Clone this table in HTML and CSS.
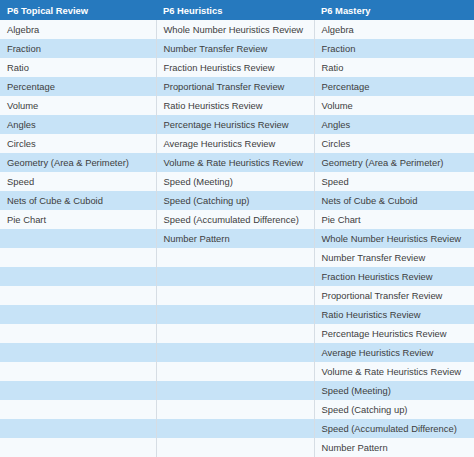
FILE: index.html
```html
<!DOCTYPE html>
<html>
<head>
<meta charset="utf-8">
<link rel="stylesheet" href="styles.css">
</head>
<body>
<table class="grid">
<colgroup><col class="c1"><col class="c2"><col class="c3"></colgroup>
<thead>
<tr><th>P6 Topical Review</th><th>P6 Heuristics</th><th>P6 Mastery</th></tr>
</thead>
<tbody>
<tr><td>Algebra</td><td>Whole Number Heuristics Review</td><td>Algebra</td></tr>
<tr><td>Fraction</td><td>Number Transfer Review</td><td>Fraction</td></tr>
<tr><td>Ratio</td><td>Fraction Heuristics Review</td><td>Ratio</td></tr>
<tr><td>Percentage</td><td>Proportional Transfer Review</td><td>Percentage</td></tr>
<tr><td>Volume</td><td>Ratio Heuristics Review</td><td>Volume</td></tr>
<tr><td>Angles</td><td>Percentage Heuristics Review</td><td>Angles</td></tr>
<tr><td>Circles</td><td>Average Heuristics Review</td><td>Circles</td></tr>
<tr><td>Geometry (Area &amp; Perimeter)</td><td>Volume &amp; Rate Heuristics Review</td><td>Geometry (Area &amp; Perimeter)</td></tr>
<tr><td>Speed</td><td>Speed (Meeting)</td><td>Speed</td></tr>
<tr><td>Nets of Cube &amp; Cuboid</td><td>Speed (Catching up)</td><td>Nets of Cube &amp; Cuboid</td></tr>
<tr><td>Pie Chart</td><td>Speed (Accumulated Difference)</td><td>Pie Chart</td></tr>
<tr><td></td><td>Number Pattern</td><td>Whole Number Heuristics Review</td></tr>
<tr><td></td><td></td><td>Number Transfer Review</td></tr>
<tr><td></td><td></td><td>Fraction Heuristics Review</td></tr>
<tr><td></td><td></td><td>Proportional Transfer Review</td></tr>
<tr><td></td><td></td><td>Ratio Heuristics Review</td></tr>
<tr><td></td><td></td><td>Percentage Heuristics Review</td></tr>
<tr><td></td><td></td><td>Average Heuristics Review</td></tr>
<tr><td></td><td></td><td>Volume &amp; Rate Heuristics Review</td></tr>
<tr><td></td><td></td><td>Speed (Meeting)</td></tr>
<tr><td></td><td></td><td>Speed (Catching up)</td></tr>
<tr><td></td><td></td><td>Speed (Accumulated Difference)</td></tr>
<tr><td></td><td></td><td>Number Pattern</td></tr>
</tbody>
</table>
</body>
</html>
```
FILE: styles.css
```css
html, body {
  margin: 0;
  padding: 0;
  background: #ffffff;
}
.grid {
  width: 474px;
  border-collapse: collapse;
  table-layout: fixed;
  font-family: "Liberation Sans", Arial, sans-serif;
  font-size: 9.4px;
  color: #3d3d3d;
}
.c1 { width: 156px; }
.c2 { width: 158px; }
.c3 { width: 160px; }
.grid th {
  background: #2679be;
  color: #ffffff;
  font-weight: 700;
  text-align: left;
  height: 20px;
  padding: 0 0 0 7px;
  box-sizing: border-box;
  white-space: nowrap;
}
.grid td {
  height: 19px;
  padding: 0 0 0 7px;
  box-sizing: border-box;
  white-space: nowrap;
  overflow: hidden;
  border-left: 1px solid #d6dde4;
  background: #f6fafd;
}
.grid td:first-child { border-left: none; }
.grid tbody tr:nth-child(even) td { background: #c7e3f7; }
```
